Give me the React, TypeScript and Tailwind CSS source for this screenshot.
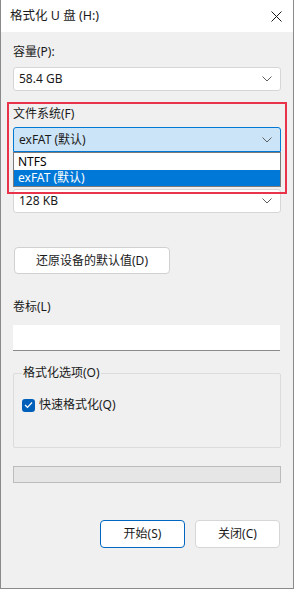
import React from "react";

const Chevron = () => (
  <svg width="10" height="6" viewBox="0 0 10 6" className="shrink-0">
    <path d="M0.5 0.5 L5 5 L9.5 0.5" fill="none" stroke="#5f5f5f" strokeWidth="1" />
  </svg>
);

function Select({ value, className = "" }: { value: string; className?: string }) {
  return (
    <div
      className={`h-[24px] flex items-center justify-between pl-[5px] pr-[8px] bg-white border border-[#d6d6d6] rounded-[3px] ${className}`}
    >
      <span>{value}</span>
      <Chevron />
    </div>
  );
}

export default function App() {
  return (
    <div
      className="w-[302px] h-[592px] bg-white text-[12px] text-[#1a1a1a] relative"
      style={{ fontFamily: '"Noto Sans", "Noto Sans CJK SC", sans-serif' }}
    >
      <div className="w-[294px] h-[589px] border-l border-r border-b border-[#8a8a8a] flex flex-col">
        {/* title bar */}
        <div className="h-[32px] bg-white flex items-center justify-between pl-[9px] pr-[11px] shrink-0">
          <span className="text-[12.5px] leading-none">格式化 U 盘 (H:)</span>
          <svg width="11" height="11" viewBox="0 0 11 11">
            <path d="M0.5 0.5 L10.5 10.5 M10.5 0.5 L0.5 10.5" stroke="#1a1a1a" strokeWidth="1" />
          </svg>
        </div>
        {/* body */}
        <div className="flex-1 bg-[#f0f0f0] px-[12px] flex flex-col relative">
          <div className="mt-[12px] leading-[16px]">容量(P):</div>
          <Select value="58.4 GB" className="mt-[7px]" />

          <div className="mt-[15px] leading-[16px]">文件系统(F)</div>
          <div className="mt-[5px] relative">
            <div className="h-[25px] flex items-center justify-between pl-[5px] pr-[8px] bg-[#cce4f7] border border-[#0078d4] rounded-t-[3px]">
              <span>exFAT (默认)</span>
              <Chevron />
            </div>
            <div className="absolute left-0 right-0 top-[25px] z-10 bg-white border border-[#7a7a7a] flex flex-col">
              <div className="h-[17px] flex items-center pl-[4px] text-black">NTFS</div>
              <div className="h-[16px] flex items-center pl-[4px] bg-[#0078d7] text-white">exFAT (默认)</div>
            </div>
          </div>

          <Select value="128 KB" className="mt-[37px]" />

          <button className="mt-[34px] w-[156px] h-[27px] bg-white border border-[#d0d0d0] rounded-[4px] text-[12px] text-[#1a1a1a] flex items-center justify-center self-start ml-[1px]">
            还原设备的默认值(D)
          </button>

          <div className="mt-[25px] leading-[16px]">卷标(L)</div>
          <div className="mt-[10px] h-[26px] bg-white border-b border-[#8a8a8a] mr-[1px]" />

          <div className="mt-[22px] h-[75px] border border-[#dcdcdc] rounded-[2px] relative">
            <div className="absolute -top-[9px] left-[8px] px-[1px] bg-[#f0f0f0] leading-[16px]">格式化选项(O)</div>
            <div className="mt-[23px] ml-[8px] flex items-center gap-[4px]">
              <div className="w-[13px] h-[13px] rounded-[3px] bg-[#005fb8] flex items-center justify-center">
                <svg width="9" height="8" viewBox="0 0 9 8">
                  <path d="M1 4 L3.5 6.3 L8 1.5" fill="none" stroke="white" strokeWidth="1.2" />
                </svg>
              </div>
              <span className="leading-[16px]">快速格式化(Q)</span>
            </div>
          </div>

          <div className="mt-[18px] h-[17px] bg-[#e6e6e6] border border-[#bcbcbc]" />

          <div className="mt-[37px] flex justify-end gap-[10px] mr-[1px]">
            <button className="w-[85px] h-[28px] bg-white border border-[#0067c0] rounded-[4px] text-[12px] text-[#1a1a1a] flex items-center justify-center">
              开始(S)
            </button>
            <button className="w-[85px] h-[28px] bg-white border border-[#d6d6d6] rounded-[4px] text-[12px] text-[#1a1a1a] flex items-center justify-center">
              关闭(C)
            </button>
          </div>
        </div>
      </div>
      {/* red annotation box */}
      <div className="absolute left-[7px] top-[102px] w-[280px] h-[92px] border-2 border-[#e8334a] pointer-events-none z-20" />
    </div>
  );
}
